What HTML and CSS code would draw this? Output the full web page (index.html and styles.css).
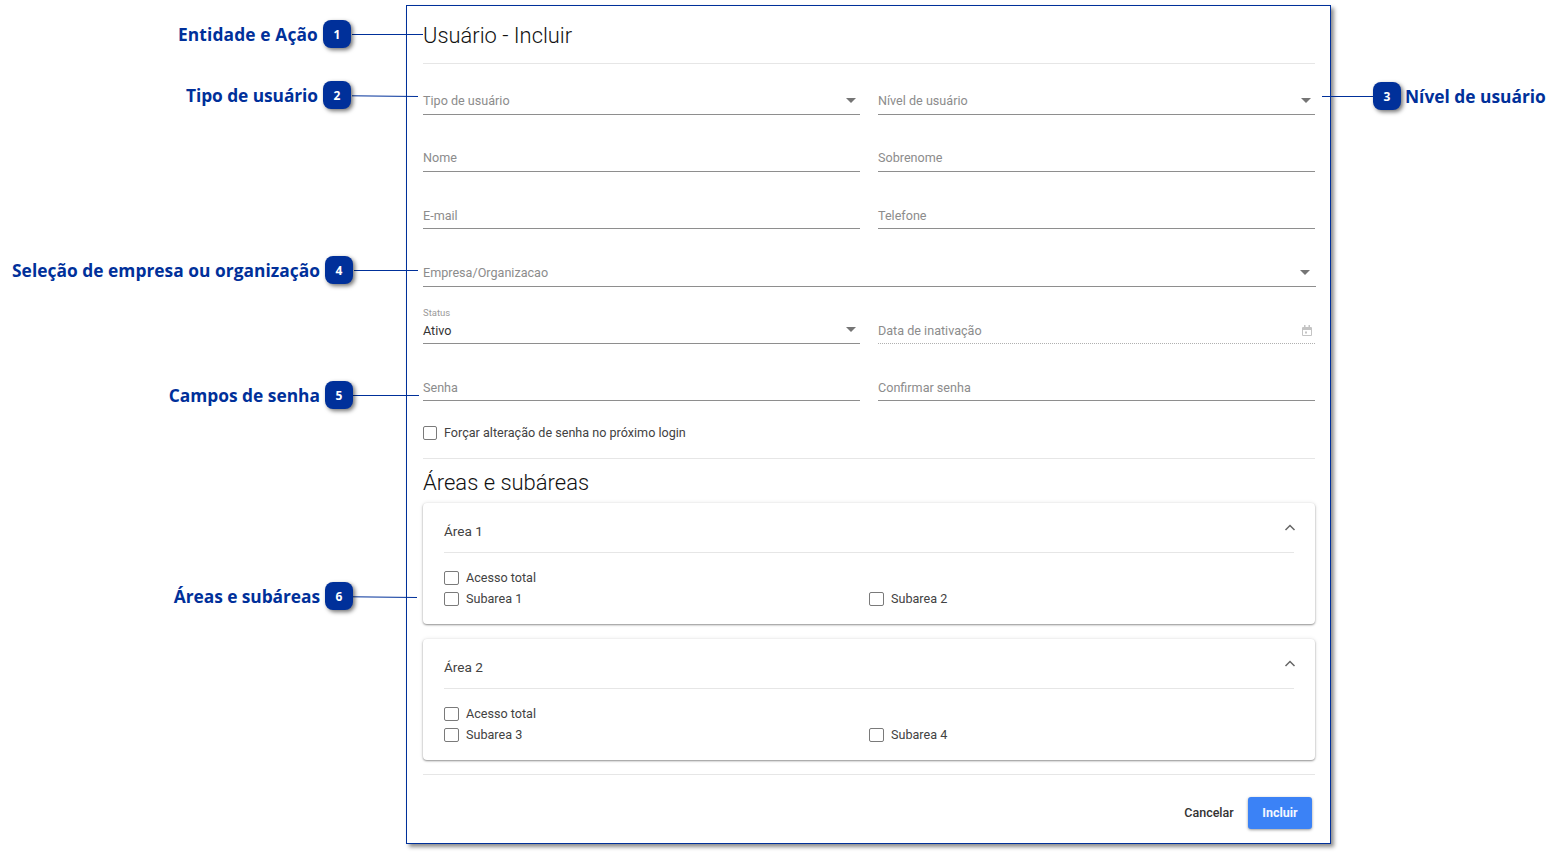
FILE: index.html
```html
<!DOCTYPE html>
<html lang="pt-BR">
<head>
<meta charset="utf-8">
<title>Usuário - Incluir</title>
<link rel="stylesheet" href="styles.css">
</head>
<body>
<div class="stage">
  <main class="frame">
    <h1 class="title">Usuário - Incluir</h1>
    <div class="grid">
      <div class="field"><span class="ph">Tipo de usuário</span><svg class="caret" viewBox="0 0 10 5"><path d="M0 0h10L5 5z"/></svg></div>
      <div class="field"><span class="ph">Nível de usuário</span><svg class="caret" viewBox="0 0 10 5"><path d="M0 0h10L5 5z"/></svg></div>
      <div class="field"><span class="ph">Nome</span></div>
      <div class="field"><span class="ph">Sobrenome</span></div>
      <div class="field low"><span class="ph">E-mail</span></div>
      <div class="field low"><span class="ph">Telefone</span></div>
      <div class="field wide"><span class="ph">Empresa/Organizacao</span><svg class="caret" viewBox="0 0 10 5"><path d="M0 0h10L5 5z"/></svg></div>
      <div class="field low"><span class="float">Status</span><span class="val">Ativo</span><svg class="caret" viewBox="0 0 10 5"><path d="M0 0h10L5 5z"/></svg></div>
      <div class="field low disabled"><span class="ph">Data de inativação</span><svg class="cal" viewBox="0 0 10 11"><path d="M1 2h8a1 1 0 0 1 1 1v7a1 1 0 0 1-1 1H1a1 1 0 0 1-1-1V3a1 1 0 0 1 1-1zm0 3v5h8V5zM2 0h1.500v2H2zM6.500 0H8v2H6.500zM3 6.500h2v2H3z"/></svg></div>
      <div class="field low"><span class="ph">Senha</span></div>
      <div class="field low"><span class="ph">Confirmar senha</span></div>
    </div>
    <label class="check force"><span class="box"></span>Forçar alteração de senha no próximo login</label>
    <hr class="rule first">
    <h2 class="subtitle">Áreas e subáreas</h2>
    <section class="card">
      <header class="card-head"><span>Área 1</span><svg class="chev" viewBox="0 0 12 7"><path d="M1.500 6l4.500-4.500 4.500 4.500"/></svg></header>
      <div class="card-body">
        <label class="check"><span class="box"></span>Acesso total</label>
        <div class="subs">
          <label class="check"><span class="box"></span>Subarea 1</label>
          <label class="check"><span class="box"></span>Subarea 2</label>
        </div>
      </div>
    </section>
    <section class="card">
      <header class="card-head"><span>Área 2</span><svg class="chev" viewBox="0 0 12 7"><path d="M1.500 6l4.500-4.500 4.500 4.500"/></svg></header>
      <div class="card-body">
        <label class="check"><span class="box"></span>Acesso total</label>
        <div class="subs">
          <label class="check"><span class="box"></span>Subarea 3</label>
          <label class="check"><span class="box"></span>Subarea 4</label>
        </div>
      </div>
    </section>
    <hr class="rule last">
    <footer class="actions">
      <button class="btn ghost" type="button">Cancelar</button>
      <button class="btn primary" type="button">Incluir</button>
    </footer>
  </main>

  <svg class="leaders" viewBox="0 0 1562 853" aria-hidden="true">
    <path d="M352 34.500H423"/>
    <path d="M352 95.800L418 96.500"/>
    <path d="M1322 96.500H1373"/>
    <path d="M354 270.500H418"/>
    <path d="M353 395.500H419"/>
    <path d="M353 596.800L417 597.500"/>
  </svg>

  <div class="callout c1"><span class="label">Entidade e Ação</span><span class="badge">1</span></div>
  <div class="callout c2"><span class="label">Tipo de usuário</span><span class="badge">2</span></div>
  <div class="callout c3"><span class="badge">3</span><span class="label">Nível de usuário</span></div>
  <div class="callout c4"><span class="label">Seleção de empresa ou organização</span><span class="badge">4</span></div>
  <div class="callout c5"><span class="label">Campos de senha</span><span class="badge">5</span></div>
  <div class="callout c6"><span class="label">Áreas e subáreas</span><span class="badge">6</span></div>
</div>
</body>
</html>
```
FILE: styles.css
```css
* { box-sizing: border-box; }
html, body { margin: 0; background: #fff; }
body { font-family: Roboto, "Liberation Sans", sans-serif; color: #212121; overflow: hidden; }

.stage { position: relative; width: 1562px; height: 853px; padding: 5px 0 0 406px; }

.frame {
  width: 925px;
  height: 839px;
  padding: 0 15px 0 16px;
  background: #fff;
  border: 1px solid #00309a;
  box-shadow: 3px 3px 4px rgba(0, 0, 0, .45);
}

.title {
  margin: 0;
  height: 58px;
  padding-top: 17px;
  font-size: 21.900px;
  line-height: 26px;
  font-weight: 300;
  color: #111;
  border-bottom: 1px solid #e6e6e6;
}

.grid {
  display: grid;
  grid-template-columns: 437px 437px;
  column-gap: 18px;
  row-gap: 17px;
  margin-top: 11px;
}

.field {
  position: relative;
  height: 40px;
  display: flex;
  align-items: flex-end;
  justify-content: space-between;
  padding-bottom: 6px;
  border-bottom: 1px solid #8e8e8e;
  font-size: 12.600px;
  line-height: 15px;
}
.low { padding-bottom: 5px; }
.wide { grid-column: 1 / -1; margin-top: 1px; margin-right: -1px; }
.ph { color: #8c8c8c; }
.val { color: #333; }
.float { position: absolute; left: 0; top: 3px; font-size: 9.500px; line-height: 12px; color: #9a9a9a; }
.caret { width: 10px; height: 5px; margin: 0 4px 5px 0; fill: #757575; }
.low .caret { margin-bottom: 6px; }
.wide .caret { margin-right: 6px; }
.disabled { border-bottom: 1px dotted #b0b0b0; }
.cal { width: 10px; height: 11px; margin: 0 3px 2px 0; fill: #c4c4c4; }

.check { display: flex; align-items: center; font-size: 12.600px; line-height: 15px; color: #424242; }
.box {
  width: 15px;
  height: 14px;
  margin-right: 7px;
  flex: none;
  border: 1px solid #7a7a7a;
  border-radius: 2px;
  background: #fff;
}
.force { margin-top: 24px; }
.force .box { width: 14px; }

.rule { margin: 0; border: 0; border-top: 1px solid #e6e6e6; }
.rule.first { margin-top: 18px; }
.rule.last { margin-top: 14px; }

.subtitle {
  margin: 0;
  height: 44px;
  padding-top: 11px;
  font-size: 22px;
  line-height: 26px;
  font-weight: 300;
  color: #111;
}

.card {
  height: 121px;
  margin-bottom: 15px;
  padding: 0 21px;
  background: #fff;
  border-radius: 4px;
  box-shadow: 0 1px 2px rgba(0, 0, 0, .4), 0 0 4px rgba(0, 0, 0, .1);
}
.card + .card { margin-bottom: 0; }
.card-head {
  height: 50px;
  display: flex;
  align-items: center;
  justify-content: space-between;
  padding-top: 7px;
  font-size: 13.600px;
  color: #424242;
  border-bottom: 1px solid #e6e6e6;
}
.chev { width: 12px; height: 7px; margin: 0 -2px 7px 0; fill: none; stroke: #666; stroke-width: 1.500; }
.card-body { padding-top: 17px; display: grid; row-gap: 6px; }
.subs { display: grid; grid-template-columns: 425px 1fr; }

.actions { display: flex; justify-content: flex-end; align-items: center; gap: 14px; padding: 22px 3px 0 0; }
.btn { border: 0; font-family: inherit; font-size: 12.500px; font-weight: 500; height: 32px; border-radius: 3px; padding: 0 0 2px; }
.ghost { width: 50px; background: none; color: #333; }
.primary {
  width: 64px;
  background: #3b82f6;
  color: #f2f6ff;
  font-weight: 700;
  box-shadow: 0 1px 3px rgba(0, 0, 0, .4);
}

.leaders { position: absolute; inset: 0; width: 1562px; height: 853px; fill: none; stroke: #00309a; stroke-width: 1; pointer-events: none; }

.callout { position: absolute; display: flex; align-items: center; gap: 5px; height: 28px; white-space: nowrap; }
.c1 { right: 1211px; top: 20px; }
.c2 { right: 1211px; top: 81px; }
.c3 { left: 1373px; top: 82px; gap: 4px; }
.c4 { right: 1209px; top: 256px; }
.c5 { right: 1209px; top: 381px; }
.c6 { right: 1209px; top: 582px; }
.c1 .label { letter-spacing: .14px; }
.c2 .label { letter-spacing: -.07px; }
.c4 .label { letter-spacing: .03px; }
.c6 .label { letter-spacing: -.06px; }

.label { font-family: "Open Sans", "Liberation Sans", sans-serif; font-size: 17.350px; font-weight: 700; color: #00309a; }
.badge {
  width: 28px;
  height: 28px;
  display: flex;
  align-items: center;
  justify-content: center;
  background: #00309a;
  color: #fff;
  font-family: "Open Sans", "Liberation Sans", sans-serif;
  font-size: 12px;
  font-weight: 700;
  border-radius: 8px;
  box-shadow: 2px 2px 4px rgba(0, 0, 0, .55);
}
```
